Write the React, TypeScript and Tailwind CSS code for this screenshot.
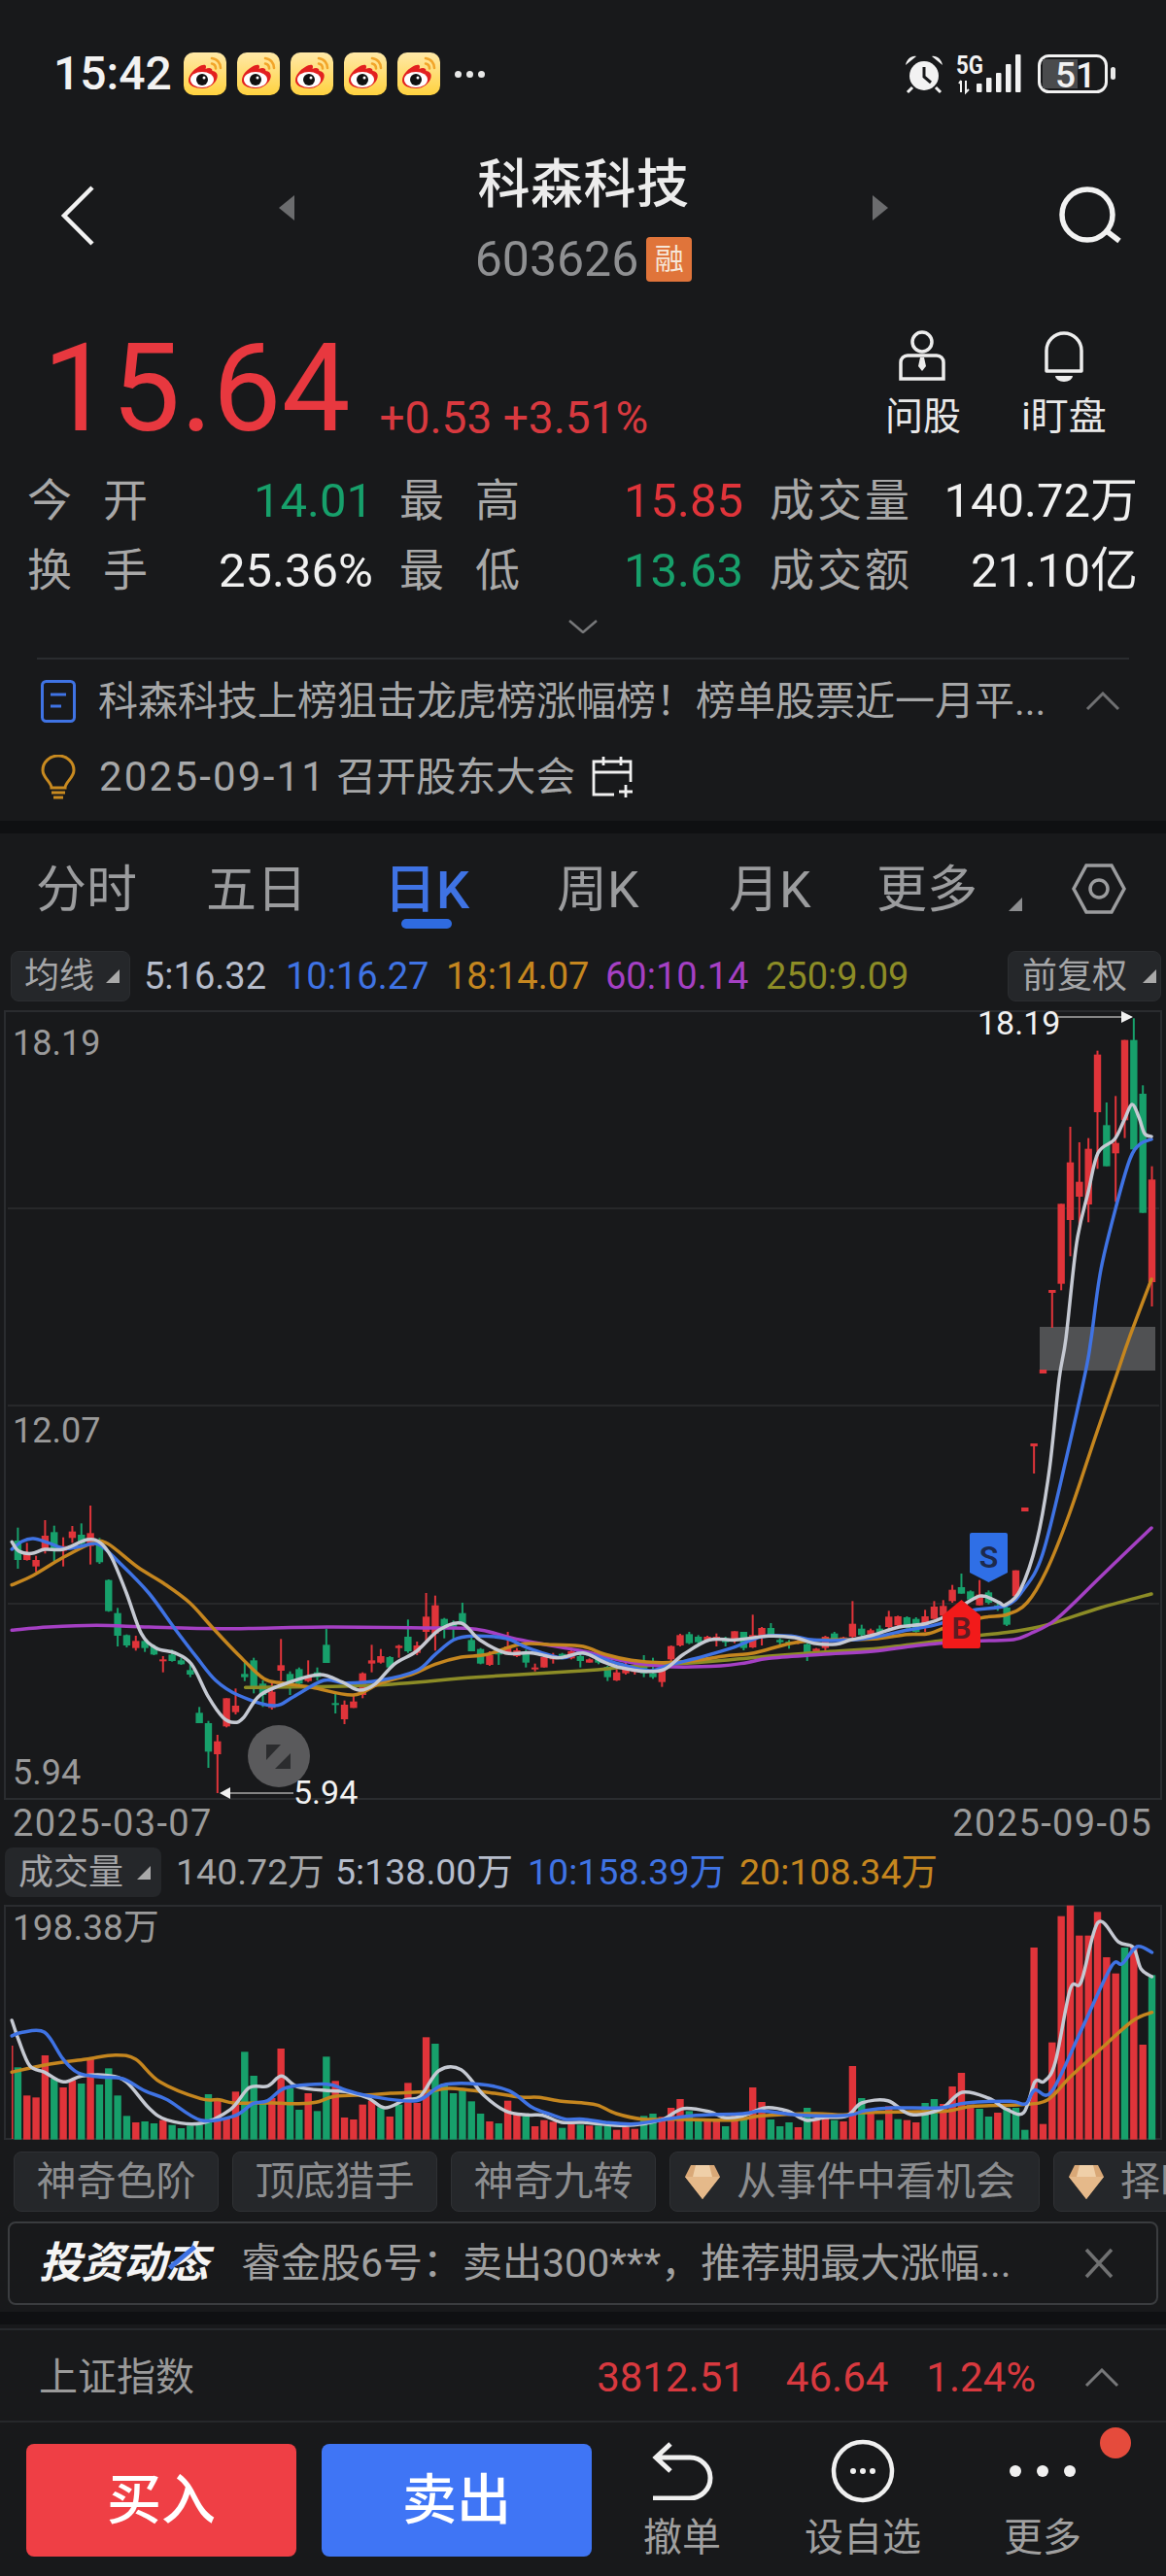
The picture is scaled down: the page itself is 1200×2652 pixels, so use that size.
type Pt = [number, number];

const RED = "#e0343a";
const GREEN = "#17a06b";
const WHITE_LINE = "#c5c9d2";
const BLUE_LINE = "#3f73e4";
const ORANGE_LINE = "#c5861f";
const PURPLE_LINE = "#a540c4";
const OLIVE_LINE = "#8c8c26";

const barX = (i: number) => 18.4 + 9.337 * i;

// convert reads taken off the zoomed crops to page coordinates
const left = (pts: number[][], top: number): Pt[] => pts.map(([x, y]) => [x / 2.613, top + y / 3]);
const right = (pts: number[][], top: number): Pt[] => pts.map(([x, y]) => [600 + x / 2.613, top + y / 3]);

function smooth(pts: Pt[]) {
  let d = `M${pts[0][0].toFixed(1)} ${pts[0][1].toFixed(1)}`;
  for (let i = 0; i < pts.length - 1; i++) {
    const p0 = pts[Math.max(i - 1, 0)];
    const p1 = pts[i];
    const p2 = pts[i + 1];
    const p3 = pts[Math.min(i + 2, pts.length - 1)];
    const c1x = p1[0] + (p2[0] - p0[0]) / 6;
    const c1y = p1[1] + (p2[1] - p0[1]) / 6;
    const c2x = p2[0] - (p3[0] - p1[0]) / 6;
    const c2y = p2[1] - (p3[1] - p1[1]) / 6;
    d += ` C${c1x.toFixed(1)} ${c1y.toFixed(1)} ${c2x.toFixed(1)} ${c2y.toFixed(1)} ${p2[0].toFixed(1)} ${p2[1].toFixed(1)}`;
  }
  return d;
}

// wick top, wick bottom, body top, body bottom, colour
type Candle = [number, number, number, number, "r" | "g"];

const candlesA: Candle[] = [
  [218, 345, 258, 318, "g"], [265, 320, 295, 318, "r"], [305, 355, 318, 338, "r"], [195, 298, 243, 285, "r"],
  [212, 322, 232, 290, "g"], [248, 338, 275, 290, "r"], [213, 265, 230, 250, "r"], [205, 280, 240, 268, "g"],
  [150, 332, 235, 275, "r"], [250, 330, 270, 325, "g"], [378, 478, 380, 476, "g"], [466, 585, 482, 552, "g"],
  [548, 588, 550, 582, "g"], [552, 598, 568, 590, "r"], [565, 602, 568, 590, "g"], [580, 612, 585, 610, "g"],
  [615, 665, 625, 630, "r"], [595, 632, 610, 630, "g"], [620, 642, 628, 640, "g"], [640, 680, 658, 672, "g"],
  [772, 822, 790, 822, "g"], [815, 960, 822, 910, "g"], [858, 1038, 878, 918, "r"], [745, 835, 745, 832, "r"],
  [715, 795, 768, 788, "r"], [635, 692, 670, 680, "g"], [620, 730, 628, 712, "g"], [690, 772, 700, 735, "g"],
  [695, 780, 725, 775, "r"], [562, 690, 643, 660, "r"], [662, 735, 670, 712, "g"], [650, 710, 655, 700, "g"],
  [628, 695, 680, 692, "r"], [650, 690, 665, 680, "g"], [530, 636, 580, 636, "g"], [730, 792, 760, 765, "g"],
  [752, 825, 765, 810, "r"], [735, 775, 755, 775, "r"], [665, 745, 668, 735, "r"], [580, 665, 628, 638, "r"],
  [593, 638, 615, 635, "r"], [615, 655, 618, 650, "g"], [580, 620, 583, 590, "r"], [502, 605, 555, 600, "g"],
  [570, 612, 582, 605, "r"], [420, 570, 493, 540, "r"], [428, 598, 458, 545, "r"], [497, 560, 500, 525, "g"],
  [505, 565, 515, 530, "g"], [450, 520, 482, 515, "g"], [555, 600, 565, 600, "g"], [590, 640, 593, 638, "g"],
  [600, 645, 612, 642, "r"], [600, 642, 602, 610, "g"], [540, 610, 585, 610, "r"], [590, 618, 597, 615, "r"],
  [595, 650, 600, 635, "g"], [638, 662, 650, 656, "r"], [610, 650, 618, 650, "r"], [605, 638, 612, 625, "r"],
  [605, 625, 608, 620, "g"], [590, 625, 600, 622, "r"], [600, 650, 615, 630, "g"], [622, 635, 625, 635, "r"],
  [620, 640, 622, 635, "g"], [645, 692, 648, 680, "g"], [655, 692, 665, 690, "r"], [635, 672, 645, 668, "r"],
  [640, 672, 658, 664, "r"], [612, 680, 645, 668, "g"], [620, 685, 668, 680, "g"], [650, 710, 660, 695, "r"],
  [582, 635, 584, 625, "r"], [546, 585, 550, 582, "r"], [540, 578, 547, 575, "g"], [550, 578, 555, 572, "g"],
  [552, 570, 555, 565, "r"], [545, 585, 555, 565, "r"], [555, 585, 560, 572, "g"], [538, 575, 538, 565, "r"],
  [540, 597, 540, 590, "g"], [487, 590, 550, 588, "r"], [525, 582, 528, 552, "r"], [513, 552, 528, 550, "g"],
  [560, 580, 565, 572, "g"], [565, 592, 570, 578, "g"], [565, 578, 568, 575, "r"], [575, 630, 578, 605, "g"],
  [590, 605, 592, 602, "r"], [552, 598, 555, 590, "r"], [540, 565, 545, 562, "g"], [555, 575, 557, 570, "r"],
  [445, 560, 515, 555, "r"], [518, 555, 530, 550, "g"], [530, 550, 535, 548, "r"], [520, 540, 530, 540, "g"],
  [475, 530, 493, 525, "r"], [490, 525, 492, 520, "r"], [492, 530, 495, 528, "g"], [495, 542, 500, 540, "g"],
  [472, 540, 492, 520, "r"], [445, 500, 462, 500, "r"], [442, 495, 460, 490, "r"], [395, 450, 410, 445, "r"],
  [360, 422, 402, 422, "g"], [412, 445, 415, 440, "g"], [380, 458, 425, 458, "r"], [412, 455, 418, 450, "g"],
  [450, 475, 458, 468, "g"], [460, 522, 465, 518, "g"], [350, 430, 350, 430, "r"],
];

// gap-up run at the right edge, already in page pixels
const candlesB: Candle[] = [
  [1552, 1556, 1552, 1556, "r"], [1486, 1517, 1486, 1489, "r"], [1410, 1414, 1410, 1414, "r"], [1328, 1367, 1328, 1331, "r"],
];

const candlesC: Candle[] = [
  [658, 925, 658, 905, "r"], [420, 820, 530, 708, "r"], [468, 735, 590, 636, "r"], [455, 715, 488, 660, "r"],
  [185, 550, 197, 375, "r"], [345, 542, 415, 542, "g"], [325, 652, 470, 502, "r"], [152, 455, 152, 400, "r"],
  [85, 490, 152, 490, "g"], [292, 686, 318, 686, "g"], [542, 975, 583, 900, "r"],
];

const candles: Candle[] = [
  ...candlesA.map(([a, b, c, d, k]): Candle => [1500 + a / 3, 1500 + b / 3, 1500 + c / 3, 1500 + d / 3, k]),
  ...candlesB,
  ...candlesC.map(([a, b, c, d, k]): Candle => [1020 + a / 3, 1020 + b / 3, 1020 + c / 3, 1020 + d / 3, k]),
];

const maWhite = smooth([
  ...left([[32, 262], [50, 290], [85, 298], [120, 285], [170, 285], [235, 255], [270, 265], [300, 310], [340, 420], [380, 545], [420, 590], [470, 605], [515, 640], [560, 740], [600, 805], [630, 820], [655, 805], [700, 735], [780, 695], [860, 672], [920, 695], [965, 720], [1010, 700], [1060, 640], [1120, 600], [1180, 535], [1240, 513], [1290, 565], [1360, 605], [1430, 605], [1500, 620]], 1500),
  ...right([[0, 605], [50, 630], [100, 650], [170, 662], [220, 655], [270, 610], [340, 565], [410, 565], [500, 553], [570, 558], [620, 575], [680, 578], [720, 565], [780, 550], [850, 525], [920, 515], [970, 495], [1050, 438], [1080, 430], [1120, 450]], 1500),
  [1035, 1652], [1050, 1637], [1067, 1587], [1080, 1513], [1090, 1420], [1097, 1378], [1108, 1280], [1120, 1227], [1130, 1187], [1147, 1173], [1157, 1153], [1165, 1137], [1172, 1150], [1178, 1167], [1185, 1170],
]);

const maBlue = smooth([
  ...left([[32, 285], [60, 260], [90, 252], [130, 265], [175, 283], [220, 275], [265, 270], [320, 325], [400, 420], [470, 530], [530, 620], [580, 690], [640, 735], [735, 768], [790, 740], [870, 690], [930, 698], [1020, 690], [1120, 660], [1170, 610], [1220, 565], [1270, 553], [1360, 560], [1420, 590], [1510, 620]], 1500),
  ...right([[0, 605], [100, 640], [180, 660], [240, 640], [310, 620], [400, 590], [480, 555], [560, 553], [620, 565], [720, 565], [790, 555], [870, 535], [960, 515], [1040, 475]], 1500),
  [1035, 1653], [1053, 1637], [1073, 1600], [1097, 1503], [1117, 1413], [1123, 1378], [1133, 1307], [1150, 1237], [1163, 1193], [1173, 1178], [1185, 1173],
]);

const maOrange = smooth([
  ...left([[32, 395], [90, 365], [170, 310], [250, 265], [290, 268], [370, 340], [440, 390], [510, 450], [570, 525], [640, 610], [710, 685], [760, 698], [840, 712], [950, 735], [1020, 700], [1110, 670], [1170, 640], [1240, 618], [1310, 610], [1400, 578], [1490, 580]], 1500),
  ...right([[0, 585], [60, 610], [130, 628], [210, 635], [290, 630], [380, 615], [460, 605], [560, 575], [650, 565], [780, 562], [870, 548], [930, 545], [1000, 515], [1080, 495]], 1500),
  [1037, 1662], [1057, 1650], [1077, 1617], [1100, 1560], [1127, 1480], [1150, 1413], [1162, 1378], [1185, 1317],
]);

const maPurple = smooth([
  ...left([[32, 535], [130, 525], [260, 520], [400, 525], [600, 530], [880, 525], [1150, 528], [1280, 532], [1400, 565]], 1500),
  ...right([[0, 600], [90, 625], [150, 638], [240, 648], [370, 645], [440, 635], [500, 622], [640, 610], [780, 600], [880, 585], [960, 575], [1070, 568]], 1500),
  [1043, 1688], [1060, 1682], [1087, 1667], [1133, 1623], [1185, 1573],
]);

const maOlive = smooth([
  ...left([[660, 712], [1000, 705], [1280, 680]], 1500),
  ...right([[0, 660], [120, 648], [240, 640], [380, 628], [500, 615], [640, 603], [800, 590], [960, 568], [1060, 552]], 1500),
  [1040, 1680], [1077, 1673], [1133, 1655], [1185, 1641],
]);

const volTops = [
  745, 832, 838, 708, 780, 807, 785, 795, 720, 798, 748, 832, 895, 915, 912, 918, 908, 923, 933, 925, 922, 828, 845, 900, 820, 697, 771, 855, 840, 687, 810, 876,
  825, 880, 712, 787, 900, 906, 860, 848, 868, 897, 860, 793, 855, 652, 672, 795, 825, 815, 850, 888, 912, 918, 848, 890, 895, 927, 908, 913, 932, 920, 922,
  925, 925, 925, 938, 930, 935, 895, 888, 898, 870, 843, 880, 910, 905, 905, 927, 895, 905, 807, 852, 906, 927, 915, 930, 870, 905, 900, 908, 912, 741, 840,
  880, 908, 865, 905, 908, 915, 855, 843, 858, 804, 762, 860, 873, 897, 885, 870, 870, 938, 375, 920, 668, 278, 245, 338, 338, 265, 405, 455, 375, 370, 675, 460,
];
const volKinds = "grrrgrrgrggggrggrgggggrrrgggrrggrggrrrrrgrgrrrggggggrgrrgrrrgrg" + "rggrrrggrrrggrrgrgrrgggrgrrgrrgrgrgrrgg" + "rrrrggrgggrrrrrrrrrrgrrggr";

const volWhite = smooth([
  ...left([[32, 600], [50, 660], [80, 740], [120, 760], [170, 790], [220, 772], [290, 770], [340, 790], [400, 870], [450, 908], [540, 918], [620, 875], [670, 808], [720, 803], [757, 772], [800, 805], [880, 817], [930, 820], [990, 840], [1035, 870], [1090, 845], [1130, 835], [1180, 755], [1240, 752], [1300, 830], [1360, 880], [1420, 892], [1460, 893], [1510, 915]], 1880),
  ...right([[0, 915], [110, 925], [170, 918], [220, 903], [270, 872], [340, 882], [380, 900], [430, 895], [490, 870], [550, 880], [600, 908], [650, 900], [710, 895], [750, 855], [820, 848], [880, 890], [960, 875], [1020, 822], [1090, 840], [1140, 875], [1185, 885], [1215, 790], [1240, 788], [1270, 730], [1310, 505], [1340, 480], [1385, 298], [1440, 358], [1480, 375], [1500, 440], [1530, 465]], 1880),
]);
const volBlue = smooth([
  ...left([[32, 648], [60, 637], [120, 637], [170, 720], [210, 762], [270, 775], [330, 780], [390, 818], [450, 845], [540, 908], [630, 895], [680, 857], [720, 848], [770, 808], [880, 797], [930, 815], [1000, 835], [1120, 848], [1190, 800], [1290, 797], [1370, 818], [1430, 868], [1480, 890], [1520, 905]], 1880),
  ...right([[0, 905], [60, 915], [130, 920], [200, 910], [290, 895], [430, 888], [480, 880], [560, 890], [650, 895], [720, 892], [760, 878], [830, 870], [960, 870], [1030, 855], [1150, 850], [1190, 858], [1215, 815], [1260, 820], [1340, 630], [1420, 435], [1450, 425], [1490, 372], [1530, 390]], 1880),
]);
const volOrange = smooth([
  ...left([[32, 760], [120, 738], [230, 720], [310, 707], [365, 720], [430, 790], [540, 842], [590, 845], [630, 855], [730, 855], [800, 857], [850, 853], [900, 835], [990, 830], [1050, 825], [1150, 820], [1210, 810], [1330, 825], [1400, 837], [1450, 838], [1510, 850]], 1880),
  ...right([[0, 855], [40, 862], [90, 888], [160, 905], [250, 905], [400, 908], [480, 895], [620, 888], [700, 892], [750, 885], [900, 882], [980, 880], [1050, 865], [1180, 860], [1250, 845], [1310, 775], [1400, 680], [1480, 600], [1530, 575]], 1880),
]);

function Corner({ color = "#a9a9a9" }: { color?: string }) {
  return (
    <svg width="14" height="14" viewBox="0 0 14 14" className="shrink-0">
      <polygon points="14,0 14,14 0,14" fill={color} />
    </svg>
  );
}

function Weibo() {
  return (
    <svg width="44" height="44" viewBox="0 0 44 44" className="shrink-0">
      <defs>
        <linearGradient id="wb" x1="0" y1="0" x2="0" y2="1">
          <stop offset="0" stopColor="#ffe9a8" />
          <stop offset="1" stopColor="#ffd23f" />
        </linearGradient>
      </defs>
      <rect width="44" height="44" rx="10" fill="url(#wb)" />
      <path d="M5 29c0-6 5-11 10-14 4-2.500 8-3 8-.5 0 1.500-.5 2.500-.5 2.500 3-1.500 7-1.500 7 2 4 .5 6 3 5 7-1.500 6-8 11-15 11-8 0-14.500-3-14.500-8z" fill="#e3201f" />
      <ellipse cx="19" cy="28" rx="12" ry="8" fill="#fff" />
      <circle cx="19" cy="28" r="6" fill="#111" />
      <circle cx="21" cy="26" r="1.500" fill="#fff" />
      <path d="M29 6c5.500 .5 9 5 9 10M29 11.500c2.500 .5 4 2.500 4 5" fill="none" stroke="#f2a52a" strokeWidth="2.600" strokeLinecap="round" />
    </svg>
  );
}

function StatusIcons() {
  return (
    <svg width="220" height="44" viewBox="930 55 220 44" className="shrink-0">
      <circle cx="951" cy="79" r="15" fill="#f2f2f2" />
      <path d="M951 70v10l7 6" fill="none" stroke="#18191b" strokeWidth="3" />
      <path d="M932 68c1-6 6-10 11-9zM970 68c-1-6-6-10-11-9z" fill="#f2f2f2" />
      <path d="M939 91l-5 5M963 91l5 5" stroke="#f2f2f2" strokeWidth="3" />
      <text x="984" y="77" fontSize="25" fontWeight="700" fill="#f2f2f2" textLength="28" lengthAdjust="spacingAndGlyphs">5G</text>
      <path d="M989 84v12M987 87l2-3M994 84v12l3-3" fill="none" stroke="#f2f2f2" strokeWidth="2" />
      {[[1005, 87], [1015, 81], [1025, 76], [1035, 67], [1045, 57]].map(([x, y]) => (
        <rect key={x} x={x} y={y} width="5.500" height={96 - y} rx="1" fill="#f2f2f2" />
      ))}
      <rect x="1069.500" y="58.500" width="69" height="37" rx="10" fill="none" stroke="#f2f2f2" strokeWidth="3" />
      <path d="M1073 62h36v30h-36z" fill="#4a4b4d" />
      <text x="1086" y="91" fontSize="37" fontWeight="500" fill="#f2f2f2">51</text>
      <rect x="1143" y="70" width="5" height="13" rx="2.500" fill="#e8e8e8" />
    </svg>
  );
}

function StatCell({ label, value, color, labelWide }: { label: string[]; value: string; color: string; labelWide?: boolean }) {
  return (
    <div className="flex items-center justify-between">
      <span className={`flex justify-between text-[#a8a8a8] ${labelWide ? "w-[124px]" : "w-[144px]"}`}>
        {label.map((c) => (
          <span key={c}>{c}</span>
        ))}
      </span>
      <span className="text-[49px]" style={{ color }}>{value}</span>
    </div>
  );
}

const tabs = [
  { label: "分时", w: "w-[175px]" },
  { label: "五日", w: "w-[188px]" },
  { label: "日K", w: "w-[173px]", active: true },
  { label: "周K", w: "w-[177px]" },
  { label: "月K", w: "w-[152px]" },
  { label: "更多", w: "w-[136px]" },
];

function KChart() {
  return (
    <svg width="1200" height="813" viewBox="0 1040 1200 813" className="block overflow-visible">
      <rect x="5" y="1041" width="1190" height="811" fill="none" stroke="#2a2c2f" strokeWidth="2" />
      {[1244, 1447, 1651].map((y) => (
        <line key={y} x1="8" x2="1193" y1={y} y2={y} stroke="#2c2e31" strokeWidth="1.500" />
      ))}
      <text x="13" y="1086" fontSize="36" fill="#9a9a9a">18.19</text>
      <text x="13" y="1485" fontSize="36" fill="#9a9a9a">12.07</text>
      <text x="13" y="1837" fontSize="36" fill="#9a9a9a">5.94</text>
      <rect x="1070" y="1366" width="119" height="45" fill="#505153" />
      {candles.map(([wt, wb, bt, bb, k], i) => {
        const c = k === "r" ? RED : GREEN;
        const x = barX(i);
        return (
          <g key={i} fill={c}>
            <rect x={x - 1} y={wt} width="2" height={wb - wt} />
            <rect x={x - 3.7} y={bt} width="7.400" height={Math.max(bb - bt, 2)} />
          </g>
        );
      })}
      <g fill="none" strokeLinecap="round" strokeLinejoin="round">
        <path d={maOlive} stroke={OLIVE_LINE} strokeWidth="3.500" />
        <path d={maPurple} stroke={PURPLE_LINE} strokeWidth="3.500" />
        <path d={maOrange} stroke={ORANGE_LINE} strokeWidth="3.500" />
        <path d={maBlue} stroke={BLUE_LINE} strokeWidth="3.500" />
        <path d={maWhite} stroke={WHITE_LINE} strokeWidth="3.500" />
      </g>
      <text x="1006" y="1065" fontSize="34" fill="#f2f2f2">18.19</text>
      <line x1="1089" x2="1155" y1="1047" y2="1047" stroke="#a8a8a8" strokeWidth="1.500" />
      <polygon points="1154,1041 1166,1047 1154,1053" fill="#f2f2f2" />
      <text x="302" y="1857" fontSize="34" fill="#f2f2f2">5.94</text>
      <line x1="235" x2="302" y1="1846" y2="1846" stroke="#a8a8a8" strokeWidth="1.500" />
      <polygon points="237,1840 226,1846 237,1852" fill="#f2f2f2" />
      <circle cx="287" cy="1808" r="32" fill="#5a5a5c" />
      <polygon points="274,1796 289,1796 274,1812" fill="#2b2c2e" />
      <polygon points="299,1805 299,1821 283,1821" fill="#2b2c2e" />
      <path d="M1000 1578h35a2 2 0 0 1 2 2v39l-19.500 10-19.500-10v-39a2 2 0 0 1 2-2z" fill="#2f6fe6" />
      <text x="1017.500" y="1614" fontSize="32" fontWeight="600" textAnchor="middle" fill="#1d2a4d">S</text>
      <path d="M970 1663l19.500-16 19.500 16v32a2 2 0 0 1-2 2h-35a2 2 0 0 1-2-2z" fill="#f21a1a" />
      <text x="989.500" y="1687" fontSize="32" fontWeight="600" textAnchor="middle" fill="#5d1c22">B</text>
    </svg>
  );
}

function VolumeChart() {
  return (
    <svg width="1200" height="243" viewBox="0 1961 1200 243" className="block">
      <rect x="5" y="1962" width="1190" height="240" fill="none" stroke="#2a2c2f" strokeWidth="2" />
      <text x="13" y="1997" fontSize="37" fill="#9a9a9a">198.38万</text>
      <rect x="12" y="2106" width="1.500" height="96" fill={RED} />
      {volTops.map((t, i) => (
        <rect
          key={i}
          x={barX(i) - 3.7}
          y={1880 + t / 3}
          width="7.400"
          height={(968 - t) / 3}
          fill={volKinds[i] === "r" ? RED : GREEN}
        />
      ))}
      <g fill="none" strokeLinecap="round" strokeLinejoin="round" strokeWidth="3.500">
        <path d={volOrange} stroke={ORANGE_LINE} />
        <path d={volWhite} stroke={WHITE_LINE} />
        <path d={volBlue} stroke={BLUE_LINE} />
      </g>
    </svg>
  );
}

function Gem() {
  return (
    <svg width="38" height="36" viewBox="0 0 38 36" className="shrink-0">
      <path d="M7 1h24l6 12-18 23L1 13z" fill="#d9a877" />
      <path d="M1 13h36L19 36z" fill="#e5b98a" />
      <path d="M12 1h14l3 12H9z" fill="#efcfa8" />
    </svg>
  );
}

function Chip({ label, gem }: { label: string; gem?: boolean }) {
  return (
    <div className={`flex h-[62px] shrink-0 items-center rounded-lg border border-[#2f3134] bg-[#25272a] ${gem ? "gap-[16px] pl-[14px] pr-[24px]" : "w-[211px] justify-center"}`}>
      {gem && <Gem />}
      <span className="whitespace-nowrap text-[41px] leading-none text-[#8c8d8f]">{label}</span>
    </div>
  );
}

export default function App() {
  return (
    <div className="flex h-[2652px] w-[1200px] flex-col overflow-hidden bg-[#18191b] font-['Roboto','Noto_Sans_CJK_SC',sans-serif] text-[#e8e8e8]">
      {/* status bar */}
      <div className="flex h-[152px] shrink-0 items-center pl-[55px] pr-[50px]">
        <span className="w-[134px] text-[48px] font-medium leading-none text-[#f2f2f2]">15:42</span>
        <div className="flex gap-[11px]">
          <Weibo />
          <Weibo />
          <Weibo />
          <Weibo />
          <Weibo />
        </div>
        <div className="ml-[15px] flex gap-[5px]">
          <span className="h-[7px] w-[7px] rounded-full bg-[#e8e8e8]" />
          <span className="h-[7px] w-[7px] rounded-full bg-[#e8e8e8]" />
          <span className="h-[7px] w-[7px] rounded-full bg-[#e8e8e8]" />
        </div>
        <div className="flex-1" />
        <StatusIcons />
      </div>

      {/* stock header */}
      <div className="flex h-[158px] shrink-0 items-start">
        <div className="mt-[39px] w-[287px] pl-[62px]">
          <svg width="36" height="62" viewBox="0 0 36 62">
            <path d="M33 2L4 31l29 29" fill="none" stroke="#f2f2f2" strokeWidth="4.500" />
          </svg>
        </div>
        <svg width="16" height="26" viewBox="0 0 16 26" className="mt-[49px] shrink-0">
          <polygon points="16,0 16,26 0,13" fill="#6b6c6e" />
        </svg>
        <div className="flex w-[595px] flex-col items-center">
          <div className="flex h-[70px] items-center pt-[8px] text-[54px] font-medium leading-none tracking-[0.5px] text-[#ececec]">科森科技</div>
          <div className="mt-[20px] flex h-[50px] items-center gap-[8px]">
            <span className="text-[50px] leading-none text-[#8f9092]">603626</span>
            <span className="flex h-[46px] w-[47px] items-center justify-center rounded-[4px] bg-[#e0743a] text-[30px] leading-none text-[#f6e6d8]">融</span>
          </div>
        </div>
        <svg width="16" height="26" viewBox="0 0 16 26" className="mt-[49px] shrink-0">
          <polygon points="0,0 16,13 0,26" fill="#6b6c6e" />
        </svg>
        <div className="flex-1" />
        <svg width="66" height="60" viewBox="0 0 66 60" className="mr-[45px] mt-[40px]">
          <circle cx="30" cy="29" r="26" fill="none" stroke="#f2f2f2" strokeWidth="5.500" />
          <path d="M50 46l13 10" stroke="#f2f2f2" strokeWidth="5.500" />
        </svg>
      </div>

      {/* price */}
      <div className="flex h-[169px] shrink-0 pl-[44px]">
        <div className="flex h-[153px] items-end">
          <span className="text-[126px] leading-[126px] text-[#e8383f]">15.64</span>
          <span className="mb-[10px] ml-[30px] text-[46px] leading-none text-[#d8393f]">+0.53 +3.51%</span>
        </div>
        <div className="flex-1" />
        <div className="mr-[62px] mt-[30px] flex gap-[64px]">
          <div className="flex w-[76px] flex-col items-center">
            <svg width="50" height="54" viewBox="0 0 50 54">
              <circle cx="24" cy="12" r="10" fill="none" stroke="#ededed" strokeWidth="3.500" />
              <path d="M2 50V33a7 7 0 0 1 7-7h30a7 7 0 0 1 7 7v17z" fill="none" stroke="#ededed" strokeWidth="3.500" />
              <path d="M22 28h4l2 9-4 5-4-5z" fill="#ededed" />
            </svg>
            <span className="mt-[16px] whitespace-nowrap text-[39px] leading-none text-[#e8e8e8]">问股</span>
          </div>
          <div className="flex w-[86px] flex-col items-center">
            <svg width="42" height="54" viewBox="0 0 42 54">
              <path d="M3 42V21a18 18 0 0 1 36 0v21z" fill="none" stroke="#ededed" strokeWidth="3.500" strokeLinejoin="round" />
              <path d="M12 47h18a9 6 0 0 1-18 0z" fill="#ededed" />
            </svg>
            <span className="mt-[16px] whitespace-nowrap text-[39px] leading-none text-[#e8e8e8]">i盯盘</span>
          </div>
        </div>
      </div>

      {/* quote table */}
      <div className="shrink-0 pl-[28px] text-[46px] leading-none">
        <div className="grid h-[72px] grid-cols-[356px_354px_379px] items-center gap-x-[27px]">
          <StatCell label={["今", "开"]} value="14.01" color={GREEN} labelWide />
          <StatCell label={["最", "高"]} value="15.85" color={RED} labelWide />
          <StatCell label={["成", "交", "量"]} value="140.72万" color="#f0f0f0" />
        </div>
        <div className="grid h-[72px] grid-cols-[356px_354px_379px] items-center gap-x-[27px]">
          <StatCell label={["换", "手"]} value="25.36%" color="#f0f0f0" labelWide />
          <StatCell label={["最", "低"]} value="13.63" color={GREEN} labelWide />
          <StatCell label={["成", "交", "额"]} value="21.10亿" color="#f0f0f0" />
        </div>
      </div>

      <div className="flex h-[54px] shrink-0 items-center justify-center pb-[10px]">
        <svg width="30" height="14" viewBox="0 0 30 14">
          <path d="M1 1l14 12L29 1" fill="none" stroke="#77787a" strokeWidth="2.500" />
        </svg>
      </div>

      {/* news */}
      <div className="mx-[38px] h-[168px] shrink-0 border-t-2 border-[#2a2c2f] text-[41px] leading-none text-[#a6a7a8]">
        <div className="flex h-[86px] items-center pl-[4px]">
          <svg width="36" height="44" viewBox="0 0 36 44" className="shrink-0">
            <rect x="1.500" y="1.500" width="33" height="41" rx="4" fill="none" stroke="#3f73e4" strokeWidth="3" />
            <path d="M10 15h16M10 27h11" stroke="#3f73e4" strokeWidth="3" />
          </svg>
          <span className="ml-[23px] w-[970px] whitespace-nowrap">科森科技上榜狙击龙虎榜涨幅榜！榜单股票近一月平...</span>
          <svg width="36" height="20" viewBox="0 0 36 20" className="ml-[46px] shrink-0">
            <path d="M2 18L18 2l16 16" fill="none" stroke="#6f7072" strokeWidth="3" />
          </svg>
        </div>
        <div className="flex h-[70px] items-center pl-[4px]">
          <svg width="36" height="46" viewBox="0 0 36 46" className="shrink-0">
            <path d="M11 34c0-6-9-10-9-18a16 15 0 0 1 32 0c0 8-9 12-9 18z" fill="none" stroke="#c88a20" strokeWidth="3" />
            <path d="M11 39h14M13 44h10" stroke="#c88a20" strokeWidth="3" />
          </svg>
          <span className="ml-[24px] whitespace-nowrap">
            <span className="text-[42px] tracking-[2.2px]">2025-09-11</span> 召开股东大会
          </span>
          <svg width="44" height="44" viewBox="0 0 44 44" className="ml-[16px] shrink-0">
            <path d="M24 40H3V6h38v21M3 17h38M13 1v9M31 1v9M36 30v13M29 37h14" fill="none" stroke="#f0f0f0" strokeWidth="2.800" />
          </svg>
        </div>
      </div>
      <div className="h-[13px] shrink-0 bg-[#0f1012]" />

      {/* period tabs */}
      <div className="flex h-[112px] shrink-0 items-center pl-[37px] pt-[5px] text-[52px] leading-none text-[#9b9c9e]">
        {tabs.map((t) => (
          <div key={t.label} className={`relative shrink-0 ${t.w}`}>
            <span className={t.active ? "-ml-[5px] text-[54px] font-medium text-[#3f73e4]" : ""}>{t.label}</span>
            {t.active && <span className="absolute left-[13px] top-[56px] h-[10px] w-[52px] rounded-full bg-[#2f6be0]" />}
          </div>
        ))}
        <div className="mt-[28px] w-[65px] shrink-0">
          <Corner color="#8c8d8f" />
        </div>
        <svg width="56" height="52" viewBox="0 0 56 52" className="-mt-[3px]">
          <path d="M15 2h26l13 24-13 24H15L2 26z" fill="none" stroke="#9b9c9e" strokeWidth="3.500" />
          <circle cx="28" cy="26" r="9" fill="none" stroke="#9b9c9e" strokeWidth="3.500" />
        </svg>
      </div>

      {/* moving averages */}
      <div className="flex h-[70px] shrink-0 items-center whitespace-nowrap pl-[11px] text-[38px] leading-none">
        <div className="flex h-[52px] w-[123px] items-center gap-[12px] rounded-lg border border-[#2b2d30] bg-[#25272a] pl-[13px] text-[36px] text-[#a5a6a8]">
          <span>均线</span>
          <Corner />
        </div>
        <span className="ml-[14px] w-[146px] text-[#b6bdcc]">5:16.32</span>
        <span className="w-[165px] text-[#3f73e4]">10:16.27</span>
        <span className="w-[164px] text-[#c5861f]">18:14.07</span>
        <span className="w-[165px] text-[#a540c4]">60:10.14</span>
        <span className="text-[#8c8c26]">250:9.09</span>
        <div className="flex-1" />
        <div className="mr-[5px] flex h-[52px] w-[158px] items-center gap-[16px] rounded-lg border border-[#2b2d30] bg-[#25272a] pl-[14px] text-[36px] text-[#a5a6a8]">
          <span>前复权</span>
          <Corner />
        </div>
      </div>

      <div className="h-[813px] shrink-0">
        <KChart />
      </div>

      <div className="flex h-[49px] shrink-0 items-center justify-between pb-[2px] pl-[13px] pr-[14px] text-[38px] leading-none tracking-[1.4px] text-[#9a9a9a]">
        <span>2025-03-07</span>
        <span>2025-09-05</span>
      </div>

      {/* volume */}
      <div className="flex h-[59px] shrink-0 items-start whitespace-nowrap pl-[5px] text-[37.500px] leading-none">
        <div className="flex h-[51px] w-[161px] items-center gap-[14px] rounded-lg bg-[#25272a] pl-[14px] text-[36px] text-[#a5a6a8]">
          <span>成交量</span>
          <Corner />
        </div>
        <div className="flex h-[51px] items-center">
          <span className="ml-[15px] w-[164px] text-[#a5a6a8]">140.72万</span>
          <span className="w-[198px] text-[#b6bdcc]">5:138.00万</span>
          <span className="w-[218px] text-[#3f73e4]">10:158.39万</span>
          <span className="text-[#c5861f]">20:108.34万</span>
        </div>
      </div>
      <div className="h-[243px] shrink-0">
        <VolumeChart />
      </div>

      <div className="mt-[11px] flex shrink-0 gap-[14px] overflow-hidden pl-[14px]">
        <Chip label="神奇色阶" />
        <Chip label="顶底猎手" />
        <Chip label="神奇九转" />
        <Chip label="从事件中看机会" gem />
        <Chip label="择时信号" gem />
      </div>

      {/* investment feed */}
      <div className="mx-[8px] mt-[10px] flex h-[86px] shrink-0 items-center whitespace-nowrap rounded-lg border-2 border-[#3a3c3f] pl-[30px]">
        <span className="relative w-[208px] text-[44px] font-bold italic leading-none tracking-[-0.5px] text-[#f4f4f4]">
          投资动态
          <span className="absolute -top-[1px] left-[145px] h-[34px] w-[5px] rotate-[50deg] bg-[#3f73e4]" />
        </span>
        <span className="w-[798px] text-[41px] leading-none text-[#a0a0a0]">睿金股6号：卖出300***，推荐期最大涨幅...</span>
        <svg width="32" height="32" viewBox="0 0 32 32" className="ml-[69px]">
          <path d="M3 2l26 28M29 2L3 30" stroke="#707172" strokeWidth="3.500" />
        </svg>
      </div>

      <div className="mt-[7px] h-[13px] shrink-0 bg-[#0f1012]" />

      {/* index ticker */}
      <div className="mt-[4px] flex h-[97px] shrink-0 items-center border-y-2 border-[#26282b] pl-[40px] pr-[48px] pt-[4px] text-[40px] leading-none">
        <span className="text-[#9a9a9a]">上证指数</span>
        <div className="flex-1" />
        <span className="text-[42px] text-[#d8393f]">3812.51</span>
        <span className="ml-[42px] text-[42px] text-[#d8393f]">46.64</span>
        <span className="ml-[39px] text-[42px] text-[#d8393f]">1.24%</span>
        <svg width="36" height="20" viewBox="0 0 36 20" className="ml-[50px]">
          <path d="M2 18L18 2l16 16" fill="none" stroke="#77787a" strokeWidth="3" />
        </svg>
      </div>

      {/* trade bar */}
      <div className="relative flex h-[158px] shrink-0 items-start">
        <div className="ml-[27px] mt-[22px] flex h-[116px] w-[278px] items-center justify-center rounded-lg bg-[#ef3f45] text-[56px] font-medium leading-none text-white">买入</div>
        <div className="ml-[26px] mt-[22px] flex h-[116px] w-[278px] items-center justify-center rounded-lg bg-[#3f75f5] text-[56px] font-medium leading-none text-white">卖出</div>
        <div className="ml-[31px] mt-[20px] flex w-[124px] flex-col items-center">
          <svg width="64" height="60" viewBox="0 0 64 60">
            <path d="M2 58h38a20 20 0 0 0 0-42H6M20 2L5 16l15 14" fill="none" stroke="#f0f0f0" strokeWidth="5" />
          </svg>
          <span className="mt-[19px] text-[40px] leading-none text-[#a0a0a0]">撤单</span>
        </div>
        <div className="ml-[62px] mt-[17px] flex w-[124px] flex-col items-center">
          <svg width="66" height="66" viewBox="0 0 66 66">
            <circle cx="33" cy="33" r="30" fill="none" stroke="#f0f0f0" strokeWidth="4.500" />
            <circle cx="23" cy="33" r="3" fill="#f0f0f0" />
            <circle cx="33" cy="33" r="3" fill="#f0f0f0" />
            <circle cx="43" cy="33" r="3" fill="#f0f0f0" />
          </svg>
          <span className="mt-[16px] whitespace-nowrap text-[40px] leading-none text-[#a0a0a0]">设自选</span>
        </div>
        <div className="ml-[61px] mt-[17px] flex w-[124px] flex-col items-center">
          <div className="flex h-[66px] items-center gap-[16px]">
            <span className="h-[12px] w-[12px] rounded-full bg-[#f0f0f0]" />
            <span className="h-[12px] w-[12px] rounded-full bg-[#f0f0f0]" />
            <span className="h-[12px] w-[12px] rounded-full bg-[#f0f0f0]" />
          </div>
          <span className="mt-[16px] text-[40px] leading-none text-[#a0a0a0]">更多</span>
        </div>
        <span className="absolute left-[1132px] top-[5px] h-[32px] w-[32px] rounded-full bg-[#e54b3c]" />
      </div>
    </div>
  );
}
